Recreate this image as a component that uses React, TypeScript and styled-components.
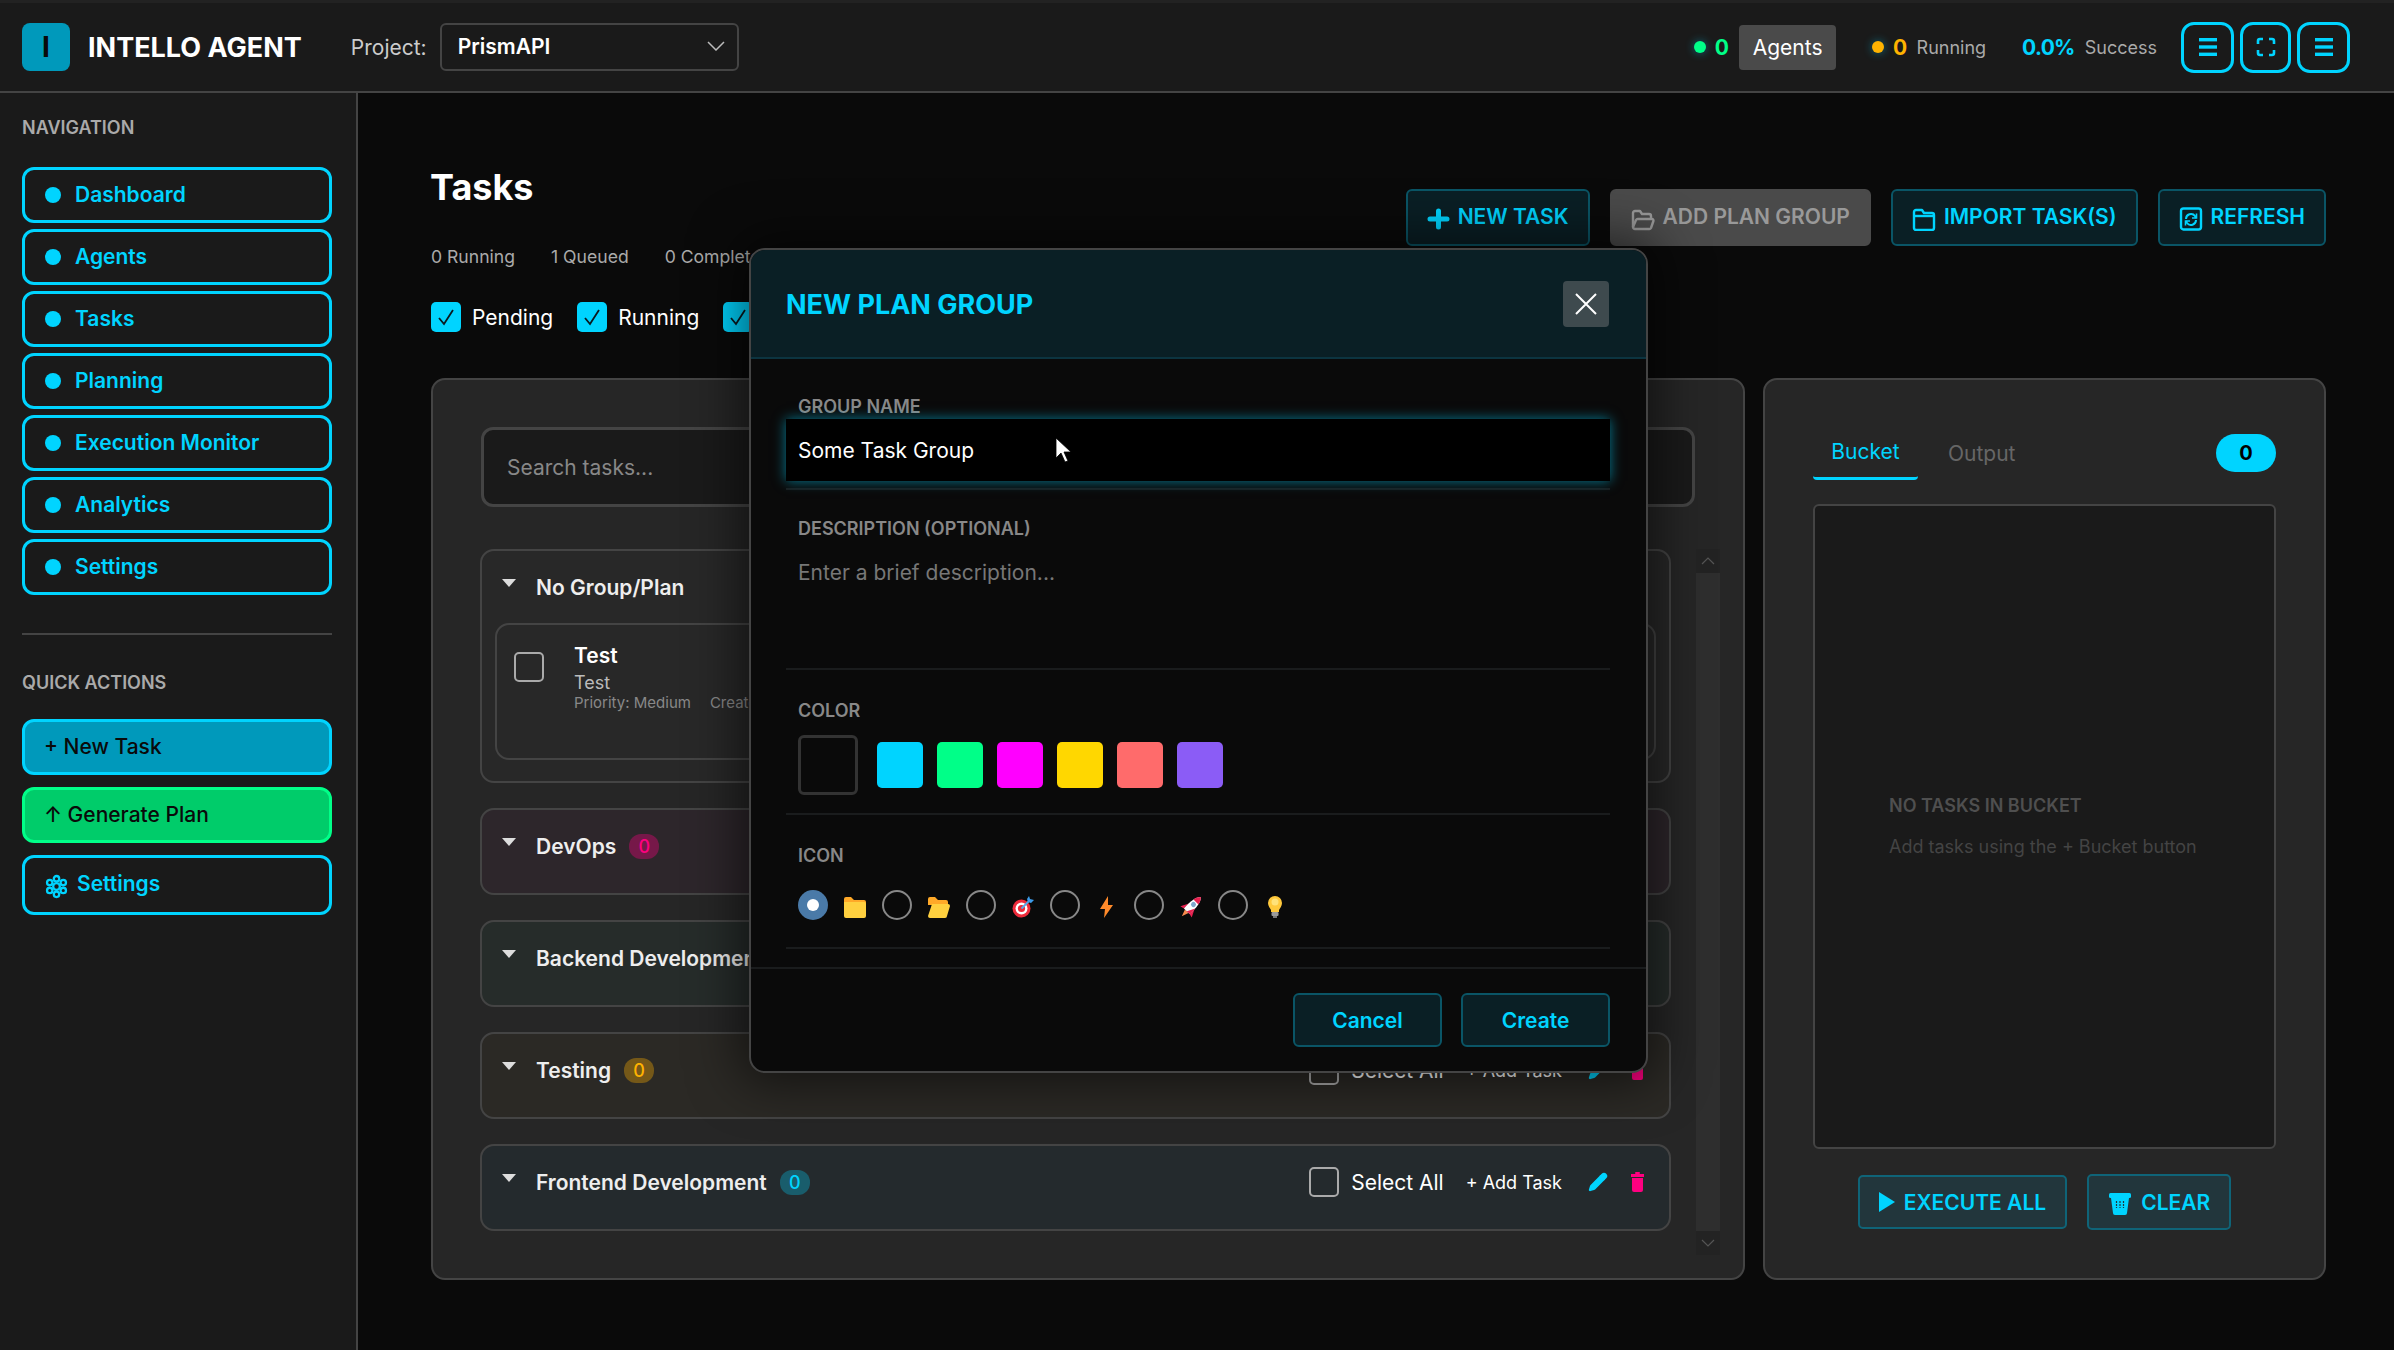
import * as React from "react";
import styled, { createGlobalStyle } from "styled-components";
import { Pencil } from "lucide-react";

const CYAN = "#00d4ff";

const GlobalStyle = createGlobalStyle`
    html, body {
        margin: 0;
        padding: 0;
        background: #0a0a0a;
        font-family: "Inter", "Noto Sans", sans-serif;
    }
    * {
        box-sizing: border-box;
    }
`;

const Page = styled.div`
    position: relative;
    width: 2394px;
    height: 1350px;
    overflow: hidden;
    display: flex;
    flex-direction: column;
    background: #0a0a0a;
    color: #fff;
`;

const TopBar = styled.header`
    flex: 0 0 93px;
    display: flex;
    align-items: center;
    padding: 0 44px 0 22px;
    background: #1a1a1a;
    border-top: 3px solid #222;
    border-bottom: 2px solid #444;
`;

const Logo = styled.div`
    width: 48px;
    height: 48px;
    border-radius: 8px;
    background: #0099bb;
    color: #0a0a0a;
    font-size: 28px;
    font-weight: 700;
    display: flex;
    align-items: center;
    justify-content: center;
`;

const Brand = styled.div`
    margin-left: 18px;
    font-size: 27px;
    font-weight: 700;
    white-space: nowrap;
`;

const ProjectLabel = styled.span`
    margin-left: 49px;
    font-size: 21px;
    color: #ccc;
`;

const ProjectSelect = styled.div`
    margin-left: 13px;
    width: 299px;
    height: 48px;
    border: 2px solid #444;
    border-radius: 6px;
    background: #1a1a1a;
    padding: 0 12px 2px 16px;
    display: flex;
    align-items: center;
    justify-content: space-between;
    font-size: 21px;
    font-weight: 600;
`;

const TopRight = styled.div`
    margin-left: auto;
    display: flex;
    align-items: center;
`;

const Stat = styled.div`
    display: flex;
    align-items: center;
    margin-right: 36px;
`;

const Dot = styled.span<{ $color: string }>`
    width: 12px;
    height: 12px;
    border-radius: 50%;
    background: ${(p) => p.$color};
    box-shadow: 0 0 10px rgba(0, 212, 255, 0.45);
    margin-right: 9px;
`;

const StatValue = styled.span<{ $color: string }>`
    font-size: 21px;
    font-weight: 700;
    letter-spacing: -0.7px;
    color: ${(p) => p.$color};
`;

const StatCaption = styled.span`
    margin-left: 10px;
    font-size: 18px;
    color: #aaa;
`;

const AgentsChip = styled.span`
    margin-left: 11px;
    width: 97px;
    height: 45px;
    border-radius: 4px;
    background: #4a4a4a;
    font-size: 21px;
    display: flex;
    align-items: center;
    justify-content: center;
`;

const TopButtons = styled.div`
    display: flex;
    gap: 6px;
    margin-left: -12px;
`;

const SquareButton = styled.div<{ $width: number }>`
    width: ${(p) => p.$width}px;
    height: 51px;
    border: 3px solid ${CYAN};
    border-radius: 13px;
    display: flex;
    align-items: center;
    justify-content: center;
`;

const Body = styled.div`
    flex: 1;
    display: flex;
    min-height: 0;
`;

const Sidebar = styled.aside`
    flex: 0 0 358px;
    background: #1a1a1a;
    border-right: 2px solid #444;
    padding: 24px 24px 0 22px;
`;

const SideHeading = styled.div`
    font-size: 18px;
    line-height: 22px;
    font-weight: 600;
    color: #aaa;
`;

const NavList = styled.nav`
    margin-top: 28px;
    display: flex;
    flex-direction: column;
    gap: 6px;
`;

const NavItem = styled.div`
    height: 56px;
    border: 3px solid ${CYAN};
    border-radius: 12px;
    padding: 0 0 1px 20px;
    display: flex;
    align-items: center;
    gap: 14px;
    font-size: 21px;
    font-weight: 600;
    color: ${CYAN};
`;

const NavDot = styled.span`
    width: 16px;
    height: 16px;
    border-radius: 50%;
    background: ${CYAN};
`;

const SideDivider = styled.hr`
    margin: 38px 0 37px;
    border: 0;
    border-top: 2px solid #444;
`;

const QuickList = styled.div`
    margin-top: 25px;
    display: flex;
    flex-direction: column;
    gap: 12px;
`;

const QuickButton = styled.div<{ $bg: string; $border: string; $color: string; $height: number }>`
    height: ${(p) => p.$height}px;
    border: 3px solid ${(p) => p.$border};
    border-radius: 12px;
    background: ${(p) => p.$bg};
    color: ${(p) => p.$color};
    padding: 0 0 1px 19px;
    display: flex;
    align-items: center;
    gap: 8px;
    font-size: 21px;
    font-weight: 500;
`;

const QuickSettings = styled(QuickButton)`
    font-weight: 600;
    padding-bottom: 3px;
    svg {
        margin-top: 5px;
    }
`;

const Main = styled.main`
    flex: 1;
    min-width: 0;
    padding: 72px 68px 0 73px;
`;

const Head = styled.div`
    display: flex;
    justify-content: space-between;
    align-items: flex-start;
`;

const Title = styled.h1`
    margin: 0 0 0 -1px;
    font-size: 36px;
    line-height: 44px;
    font-weight: 700;
`;

const Counters = styled.div`
    margin-top: 37px;
    display: flex;
    gap: 36px;
    font-size: 17.6px;
    line-height: 22px;
    color: #aaa;
`;

const Filters = styled.div`
    margin-top: 34px;
    display: flex;
    gap: 24px;
`;

const Filter = styled.label`
    display: flex;
    align-items: center;
    gap: 11px;
    font-size: 21px;
    white-space: nowrap;
`;

const CheckBox = styled.span<{ $on?: boolean }>`
    flex: 0 0 30px;
    width: 30px;
    height: 30px;
    border-radius: 5px;
    background: ${(p) => (p.$on ? CYAN : "transparent")};
    border: ${(p) => (p.$on ? "none" : "2px solid #aaa")};
    display: flex;
    align-items: center;
    justify-content: center;
`;

const Actions = styled.div`
    padding-top: 24px;
    display: flex;
    gap: 20px;
`;

const ActionButton = styled.div<{ $disabled?: boolean }>`
    height: 57px;
    padding: 0 19px 3px;
    border: 2px solid ${(p) => (p.$disabled ? "#4a4a4a" : "#0a5566")};
    border-radius: 6px;
    background: ${(p) => (p.$disabled ? "#4a4a4a" : "#0a1f25")};
    color: ${(p) => (p.$disabled ? "#999" : CYAN)};
    display: flex;
    align-items: center;
    gap: 8px;
    font-size: 21px;
    font-weight: 600;
    white-space: nowrap;
    svg {
        margin-top: 6px;
    }
`;

const Content = styled.div`
    margin-top: 46px;
    height: 902px;
    display: flex;
    gap: 18px;
`;

const TasksPanel = styled.section`
    flex: 1;
    min-width: 0;
    background: #262626;
    border: 2px solid #444;
    border-radius: 14px;
    padding: 47px 48px 0 48px;
`;

const SearchBox = styled.div`
    height: 80px;
    border: 3px solid #444;
    border-radius: 12px;
    background: #1a1a1a;
    padding-left: 23px;
    display: flex;
    align-items: center;
    font-size: 21px;
    color: #888;
`;

const ListArea = styled.div`
    margin: 42px -25px 0 -1px;
    display: flex;
    gap: 25px;
`;

const Groups = styled.div`
    flex: 1;
    display: flex;
    flex-direction: column;
    gap: 25px;
`;

const Group = styled.div<{ $bg: string }>`
    position: relative;
    min-height: 87px;
    background: ${(p) => p.$bg};
    border: 2px solid #444;
    border-radius: 14px;
    padding: 0 13px;
`;

const GroupHeader = styled.div`
    height: 72px;
    padding: 0 12px 0 7px;
    display: flex;
    align-items: center;
    font-size: 21px;
    font-weight: 600;
    color: #eee;
`;

const Caret = styled.span`
    width: 0;
    height: 0;
    margin: -8px 20px 0 0;
    border-left: 7.5px solid transparent;
    border-right: 7.5px solid transparent;
    border-top: 8px solid #ddd;
`;

const GroupBadge = styled.span<{ $color: string; $bg: string }>`
    margin-left: 13px;
    width: 30px;
    height: 25px;
    border-radius: 12px;
    background: ${(p) => p.$bg};
    color: ${(p) => p.$color};
    font-size: 18px;
    font-weight: 500;
    display: flex;
    align-items: center;
    justify-content: center;
`;

const GroupTools = styled.div`
    margin-left: auto;
    display: flex;
    align-items: center;
    font-weight: 400;
`;

const SelectAll = styled.span`
    margin-left: 12px;
    font-size: 21px;
    color: #fff;
`;

const AddTask = styled.span`
    margin: 0 26px 0 22px;
    font-size: 18px;
    color: #fff;
`;

const TrashWrap = styled.span`
    margin-left: 23px;
    display: flex;
`;

const TaskCard = styled.div`
    height: 137px;
    margin-bottom: 21px;
    border: 2px solid #444;
    border-radius: 14px;
    padding: 27px 17px;
    display: flex;
    gap: 30px;
`;

const TaskText = styled.div`
    display: flex;
    flex-direction: column;
`;

const TaskName = styled.div`
    font-size: 21px;
    line-height: 26px;
    margin-top: -9px;
    font-weight: 600;
`;

const TaskDescription = styled.div`
    font-size: 18px;
    line-height: 22px;
    margin-top: 3px;
    color: #bbb;
`;

const TaskMeta = styled.div`
    display: flex;
    gap: 19px;
    margin-top: -1px;
    font-size: 15px;
    line-height: 20px;
    color: #888;
`;

const ScrollBar = styled.div`
    flex: 0 0 24px;
    height: 706px;
    background: #232323;
    display: flex;
    flex-direction: column;
`;

const ScrollArrow = styled.div`
    height: 24px;
    display: flex;
    align-items: center;
    justify-content: center;
`;

const ScrollThumb = styled.div`
    flex: 1;
    background: #2e2e2e;
`;

const BucketPanel = styled.section`
    flex: 0 0 563px;
    background: #262626;
    border: 2px solid #444;
    border-radius: 14px;
    padding: 55px 48px 0 48px;
    display: flex;
    flex-direction: column;
`;

const TabRow = styled.div`
    height: 45px;
    display: flex;
    align-items: flex-start;
`;

const Tab = styled.div<{ $active?: boolean }>`
    width: ${(p) => (p.$active ? "105px" : "auto")};
    height: 45px;
    margin-left: ${(p) => (p.$active ? "0" : "30px")};
    padding-top: ${(p) => (p.$active ? "4px" : "6px")};
    text-align: center;
    font-size: 21px;
    line-height: 26px;
    color: ${(p) => (p.$active ? CYAN : "#666")};
    border-bottom: ${(p) => (p.$active ? `3px solid ${CYAN}` : "none")};
    border-radius: 0 0 4px 4px;
`;

const CountPill = styled.span`
    margin: -1px 0 0 auto;
    width: 60px;
    height: 38px;
    border-radius: 19px;
    background: ${CYAN};
    color: #000;
    font-size: 20px;
    font-weight: 700;
    display: flex;
    align-items: center;
    justify-content: center;
`;

const BucketBox = styled.div`
    margin-top: 24px;
    height: 645px;
    background: #1a1a1a;
    border: 2px solid #444;
    border-radius: 6px;
    padding: 289px 0 0 74px;
`;

const EmptyTitle = styled.div`
    font-size: 18px;
    line-height: 22px;
    font-weight: 600;
    color: #4f4f4f;
`;

const EmptyHint = styled.div`
    margin-top: 19px;
    font-size: 18px;
    line-height: 22px;
    color: #444;
`;

const BucketActions = styled.div`
    margin-top: 25px;
    display: flex;
    justify-content: center;
    align-items: center;
    gap: 20px;
`;

const BucketButton = styled.div<{ $height: number }>`
    height: ${(p) => p.$height}px;
    padding: 0 19px;
    border: 2px solid #0f6478;
    border-radius: 5px;
    background: #22363c;
    color: ${CYAN};
    display: flex;
    align-items: center;
    gap: 9px;
    font-size: 21px;
    font-weight: 600;
    white-space: nowrap;
`;

// modal sits over the page, so this one is placed directly
const Modal = styled.div`
    position: absolute;
    left: 749px;
    top: 248px;
    width: 899px;
    height: 825px;
    background: #0a0a0a;
    border: 2px solid #444;
    border-radius: 16px;
    box-shadow: 0 0 50px 10px rgba(0, 0, 0, 0.55);
    overflow: hidden;
`;

const ModalHead = styled.div`
    height: 109px;
    padding: 1px 37px 0 35px;
    background: #0a1f25;
    border-bottom: 2px solid #0c3440;
    display: flex;
    align-items: center;
    justify-content: space-between;
`;

const ModalTitle = styled.h2`
    margin: 1px 0 0;
    font-size: 27px;
    font-weight: 700;
    color: ${CYAN};
`;

const CloseButton = styled.div`
    width: 46px;
    height: 46px;
    border-radius: 4px;
    background: #3e4a4e;
    display: flex;
    align-items: center;
    justify-content: center;
`;

const ModalBody = styled.div`
    padding: 37px 36px 0 35px;
`;

const Field = styled.div<{ $top: number; $bottom: number; $height?: number }>`
    padding: ${(p) => p.$top}px 0 ${(p) => p.$bottom}px;
    height: ${(p) => (p.$height ? `${p.$height}px` : "auto")};
    border-bottom: 2px solid #1a1c1d;
`;

const FieldLabel = styled.div`
    margin-left: 12px;
    font-size: 18px;
    line-height: 22px;
    font-weight: 600;
    color: #888;
`;

const NameInput = styled.div`
    position: relative;
    margin-top: 1px;
    height: 62px;
    background: #000;
    padding-left: 12px;
    display: flex;
    align-items: center;
    font-size: 21px;
    box-shadow: 0 0 12px rgba(0, 212, 255, 0.55);
`;

const Cursor = styled.svg`
    position: absolute;
    left: 269px;
    top: 19px;
`;

const Placeholder = styled.div`
    margin: 20px 0 0 12px;
    font-size: 21px;
    line-height: 26px;
    color: #777;
`;

const Swatches = styled.div`
    margin: 13px 0 0 12px;
    display: flex;
    align-items: center;
    gap: 14px;
`;

const NoColor = styled.div`
    width: 60px;
    height: 60px;
    margin-right: 5px;
    border: 3px solid #333;
    border-radius: 6px;
`;

const Swatch = styled.div<{ $color: string }>`
    width: 46px;
    height: 46px;
    border-radius: 5px;
    background: ${(p) => p.$color};
`;

const IconChoices = styled.div`
    margin: 23px 0 0 12px;
    display: flex;
    align-items: center;
    gap: 16px;
`;

const Radio = styled.span<{ $on?: boolean }>`
    width: 30px;
    height: 30px;
    border-radius: 50%;
    background: ${(p) => (p.$on ? "#4a7aa8" : "transparent")};
    border: ${(p) => (p.$on ? "none" : "2px solid #888")};
    display: flex;
    align-items: center;
    justify-content: center;
    &::after {
        content: "";
        display: ${(p) => (p.$on ? "block" : "none")};
        width: 12px;
        height: 12px;
        border-radius: 50%;
        background: #fff;
    }
`;

const IconCell = styled.span`
    width: 22px;
    height: 22px;
    margin-top: 4px;
    display: flex;
    align-items: center;
    justify-content: center;
`;

const ModalFoot = styled.div`
    margin-top: 18px;
    padding: 24px 36px 0;
    border-top: 2px solid #1a1c1d;
    display: flex;
    justify-content: flex-end;
    gap: 19px;
`;

const FootButton = styled.div`
    width: 149px;
    height: 54px;
    border: 2px solid #0a5566;
    border-radius: 6px;
    background: #0a1f25;
    color: ${CYAN};
    font-size: 21px;
    font-weight: 600;
    display: flex;
    align-items: center;
    justify-content: center;
`;

const Bars = ({ color }: { color: string }) => (
    <svg width="20" height="20" viewBox="0 0 20 20">
        <rect x="1" y="1" width="18" height="3.4" fill={color} />
        <rect x="1" y="8.3" width="18" height="3.4" fill={color} />
        <rect x="1" y="15.6" width="18" height="3.4" fill={color} />
    </svg>
);

const Corners = () => (
    <svg width="20" height="20" viewBox="0 0 20 20" fill="none" stroke={CYAN} strokeWidth="2.6">
        <path d="M2 7V4a2 2 0 0 1 2-2h3M13 2h3a2 2 0 0 1 2 2v3M18 13v3a2 2 0 0 1-2 2h-3M7 18H4a2 2 0 0 1-2-2v-3" />
    </svg>
);

const Tick = () => (
    <svg width="20" height="20" viewBox="0 0 20 20" fill="none" stroke="#0a1a20" strokeWidth="1.8">
        <path d="M3 11l5 6L17 3" />
    </svg>
);

const Gear = () => (
    <svg width="25" height="25" viewBox="0 0 24 24" fill="none" stroke={CYAN} strokeWidth="2.2">
        <circle cx="12" cy="12" r="3.2" />
        <circle cx="12" cy="4.5" r="2.6" />
        <circle cx="12" cy="19.5" r="2.6" />
        <circle cx="5.5" cy="8.2" r="2.6" />
        <circle cx="18.5" cy="8.2" r="2.6" />
        <circle cx="5.5" cy="15.8" r="2.6" />
        <circle cx="18.5" cy="15.8" r="2.6" />
    </svg>
);

const Plus = () => (
    <svg width="23" height="22" viewBox="0 0 23 22" fill="none" stroke={CYAN} strokeWidth="5" strokeLinecap="round">
        <path d="M11.5 3v16M3 11h17" />
    </svg>
);

const OpenFolderLine = () => (
    <svg width="24" height="23" viewBox="0 0 24 23" fill="none" stroke="#999" strokeWidth="2.4" strokeLinejoin="round">
        <path d="M2 19V5a2 2 0 0 1 2-2h5l2 3h7a2 2 0 0 1 2 2v3" />
        <path d="M2 19l3-7a2 2 0 0 1 2-1h14a1.5 1.5 0 0 1 1.4 2l-2.4 7a2 2 0 0 1-2 1H4a2 2 0 0 1-2-2z" />
    </svg>
);

const FolderLine = () => (
    <svg width="24" height="23" viewBox="0 0 24 23" fill="none" stroke={CYAN} strokeWidth="2.4" strokeLinejoin="round">
        <path d="M2 4a2 2 0 0 1 2-2h6l2 3h8a2 2 0 0 1 2 2v13a2 2 0 0 1-2 2H4a2 2 0 0 1-2-2z" />
        <path d="M2 8h20" />
    </svg>
);

const RefreshBox = () => (
    <svg width="24" height="24" viewBox="0 0 24 24" fill="none" stroke={CYAN} strokeWidth="2.4">
        <rect x="2" y="1.5" width="20" height="21" rx="2.5" />
        <path d="M7 12a5 5 0 0 1 9-3l1 2M17 13a5 5 0 0 1-9 3l-1-2" strokeWidth="2" />
        <path d="M17.5 6.5v4.5H13M6.5 18.5V14H11" strokeWidth="1.6" />
    </svg>
);

const Trash = ({ color }: { color: string }) => (
    <svg width="13" height="20" viewBox="0 0 13 20" fill={color}>
        <rect x="4" y="0" width="5" height="2" rx="1" />
        <rect x="0" y="2" width="13" height="3" />
        <path d="M1 6h11v12a2 2 0 0 1-2 2H3a2 2 0 0 1-2-2z" />
    </svg>
);

const Cup = () => (
    <svg width="24" height="24" viewBox="0 0 24 24" fill={CYAN} style={{ marginTop: 4 }}>
        <rect x="1" y="1" width="22" height="5" rx="1.5" />
        <path d="M3 6h18l-2 15a2 2 0 0 1-2 2H7a2 2 0 0 1-2-2z" />
        <path d="M8.5 9v7M12 9v7M15.5 9v7" stroke="#22363c" strokeWidth="1.2" strokeDasharray="2 1" />
    </svg>
);

const FolderEmoji = () => (
    <svg width="22" height="21" viewBox="0 0 22 21">
        <path d="M0 2a2 2 0 0 1 2-2h5l3 3h10a2 2 0 0 1 2 2v3H0z" fill="#ffa928" />
        <path d="M0 5h20a2 2 0 0 1 2 2v12a2 2 0 0 1-2 2H2a2 2 0 0 1-2-2z" fill="#ffd03f" />
    </svg>
);

const OpenFolderEmoji = () => (
    <svg width="22" height="21" viewBox="0 0 22 21">
        <path d="M0 2a2 2 0 0 1 2-2h5l3 3h8a2 2 0 0 1 2 2v3H0v11z" fill="#ffa928" />
        <path d="M4 7h16a2 2 0 0 1 2 2l-3 10a2 2 0 0 1-2 2H2a2 2 0 0 1-2-2z" fill="#ffd03f" />
    </svg>
);

const DartEmoji = () => (
    <svg width="22" height="22" viewBox="0 0 22 22">
        <circle cx="9.5" cy="12.5" r="9" fill="#ee2b3b" />
        <circle cx="9.5" cy="12.5" r="6" fill="#fff" />
        <circle cx="9.5" cy="12.5" r="3.6" fill="#ee2b3b" />
        <path d="M9.5 12.5L18 4" stroke="#56a8e8" strokeWidth="2" />
        <path d="M15 3l2-3 1 3 4 1-3 3-3-1z" fill="#3d9be9" />
    </svg>
);

const BoltEmoji = () => (
    <svg width="14" height="22" viewBox="0 0 14 22">
        <path d="M8 0L0 13h5l-1 9 9-13H8z" fill="#ff8a2a" />
    </svg>
);

const RocketEmoji = () => (
    <svg width="22" height="22" viewBox="0 0 22 22">
        <g transform="rotate(45 11 11)">
            <path d="M8.5 17h5L11 24z" fill="#f98a4e" />
            <path d="M7 10L3 18l4-1zM15 10l4 8-4-1z" fill="#e8204f" />
            <path d="M11-3c4 4 4.5 11 4 20H7C6.500 8 7 1 11-3z" fill="#fff" />
            <path d="M11-3c2 2 3 4 3.500 7h-7C8 1 9-1 11-3z" fill="#e8204f" />
            <path d="M11 17h4c.3-3 .3-5 .2-8z" fill="#e8204f" />
            <circle cx="11" cy="7.500" r="2.500" fill="#7fa8cc" />
        </g>
    </svg>
);

const BulbEmoji = () => (
    <svg width="14" height="22" viewBox="0 0 14 22">
        <path d="M7 0a7 7 0 0 1 7 7c0 3-2 5-3 7v2H3v-2C2 12 0 10 0 7a7 7 0 0 1 7-7z" fill="#ffc93c" />
        <circle cx="7" cy="6" r="3.5" fill="#ffe27a" />
        <rect x="3.5" y="16" width="7" height="4" rx="1" fill="#9a9a9a" />
        <rect x="5" y="20" width="4" height="2" fill="#777" />
    </svg>
);

const iconChoices = [
    { id: "folder", glyph: <FolderEmoji /> },
    { id: "open", glyph: <OpenFolderEmoji /> },
    { id: "dart", glyph: <DartEmoji /> },
    { id: "bolt", glyph: <BoltEmoji /> },
    { id: "rocket", glyph: <RocketEmoji /> },
    { id: "bulb", glyph: <BulbEmoji /> },
];

const navItems = ["Dashboard", "Agents", "Tasks", "Planning", "Execution Monitor", "Analytics", "Settings"];
const swatches = ["#00d4ff", "#00ff88", "#ff00ff", "#ffd700", "#ff6b6b", "#8b5cf6"];

const groups = [
    { name: "DevOps", bg: "#2d262b", badge: "#ff0080", badgeBg: "rgba(255,0,128,.35)" },
    { name: "Backend Development", bg: "#262c2a", badge: "#00ff88", badgeBg: "rgba(0,255,136,.3)" },
    { name: "Testing", bg: "#2b2925", badge: "#ffb300", badgeBg: "rgba(255,179,0,.35)" },
    { name: "Frontend Development", bg: "#242a2d", badge: CYAN, badgeBg: "rgba(0,212,255,.3)" },
];

const GroupRowTools = () => (
    <GroupTools>
        <CheckBox />
        <SelectAll>Select All</SelectAll>
        <AddTask>+ Add Task</AddTask>
        <Pencil size={20} color={CYAN} fill={CYAN} />
        <TrashWrap>
            <Trash color="#ff0080" />
        </TrashWrap>
    </GroupTools>
);

export default function App() {
    return (
        <Page>
            <GlobalStyle />
            <TopBar>
                <Logo>I</Logo>
                <Brand>INTELLO AGENT</Brand>
                <ProjectLabel>Project:</ProjectLabel>
                <ProjectSelect>
                    PrismAPI
                    <svg width="18" height="10" viewBox="0 0 18 10" fill="none" stroke="#bbb" strokeWidth="1.5">
                        <path d="M1 1l8 8 8-8" />
                    </svg>
                </ProjectSelect>
                <TopRight>
                    <Stat>
                        <Dot $color="#00ff88" />
                        <StatValue $color="#00ff88">0</StatValue>
                        <AgentsChip>Agents</AgentsChip>
                    </Stat>
                    <Stat>
                        <Dot $color="#ffb300" />
                        <StatValue $color="#ffb300">0</StatValue>
                        <StatCaption>Running</StatCaption>
                    </Stat>
                    <Stat>
                        <StatValue $color={CYAN}>0.0%</StatValue>
                        <StatCaption>Success</StatCaption>
                    </Stat>
                    <TopButtons>
                        <SquareButton $width={53}>
                            <Bars color={CYAN} />
                        </SquareButton>
                        <SquareButton $width={51}>
                            <Corners />
                        </SquareButton>
                        <SquareButton $width={53}>
                            <Bars color={CYAN} />
                        </SquareButton>
                    </TopButtons>
                </TopRight>
            </TopBar>

            <Body>
                <Sidebar>
                    <SideHeading>NAVIGATION</SideHeading>
                    <NavList>
                        {navItems.map((item) => (
                            <NavItem key={item}>
                                <NavDot />
                                {item}
                            </NavItem>
                        ))}
                    </NavList>
                    <SideDivider />
                    <SideHeading>QUICK ACTIONS</SideHeading>
                    <QuickList>
                        <QuickButton $bg="#0099bb" $border={CYAN} $color="#0a0a0a" $height={56}>
                            + New Task
                        </QuickButton>
                        <QuickButton $bg="#00cc6a" $border="#00ff88" $color="#0a0a0a" $height={56}>
                            ↑ Generate Plan
                        </QuickButton>
                        <QuickSettings $bg="#1a1a1a" $border={CYAN} $color={CYAN} $height={60}>
                            <Gear />
                            Settings
                        </QuickSettings>
                    </QuickList>
                </Sidebar>

                <Main>
                    <Head>
                        <div>
                            <Title>Tasks</Title>
                            <Counters>
                                <span>0 Running</span>
                                <span>1 Queued</span>
                                <span>0 Completed</span>
                            </Counters>
                            <Filters>
                                <Filter>
                                    <CheckBox $on>
                                        <Tick />
                                    </CheckBox>
                                    Pending
                                </Filter>
                                <Filter>
                                    <CheckBox $on>
                                        <Tick />
                                    </CheckBox>
                                    Running
                                </Filter>
                                <Filter>
                                    <CheckBox $on>
                                        <Tick />
                                    </CheckBox>
                                </Filter>
                            </Filters>
                        </div>
                        <Actions>
                            <ActionButton>
                                <Plus />
                                NEW TASK
                            </ActionButton>
                            <ActionButton $disabled>
                                <OpenFolderLine />
                                ADD PLAN GROUP
                            </ActionButton>
                            <ActionButton>
                                <FolderLine />
                                IMPORT TASK(S)
                            </ActionButton>
                            <ActionButton>
                                <RefreshBox />
                                REFRESH
                            </ActionButton>
                        </Actions>
                    </Head>

                    <Content>
                        <TasksPanel>
                            <SearchBox>Search tasks...</SearchBox>
                            <ListArea>
                                <Groups>
                                    <Group $bg="#282828">
                                        <GroupHeader>
                                            <Caret />
                                            No Group/Plan
                                            <GroupRowTools />
                                        </GroupHeader>
                                        <TaskCard>
                                            <CheckBox />
                                            <TaskText>
                                                <TaskName>Test</TaskName>
                                                <TaskDescription>Test</TaskDescription>
                                                <TaskMeta>
                                                    <span>Priority: Medium</span>
                                                    <span>Created</span>
                                                </TaskMeta>
                                            </TaskText>
                                        </TaskCard>
                                    </Group>
                                    {groups.map((group) => (
                                        <Group key={group.name} $bg={group.bg}>
                                            <GroupHeader>
                                                <Caret />
                                                {group.name}
                                                <GroupBadge $color={group.badge} $bg={group.badgeBg}>
                                                    0
                                                </GroupBadge>
                                                <GroupRowTools />
                                            </GroupHeader>
                                        </Group>
                                    ))}
                                </Groups>
                                <ScrollBar>
                                    <ScrollArrow>
                                        <svg width="14" height="8" viewBox="0 0 14 8" fill="none" stroke="#555" strokeWidth="1.2">
                                            <path d="M1 7l6-6 6 6" />
                                        </svg>
                                    </ScrollArrow>
                                    <ScrollThumb />
                                    <ScrollArrow>
                                        <svg width="14" height="8" viewBox="0 0 14 8" fill="none" stroke="#555" strokeWidth="1.2">
                                            <path d="M1 1l6 6 6-6" />
                                        </svg>
                                    </ScrollArrow>
                                </ScrollBar>
                            </ListArea>
                        </TasksPanel>

                        <BucketPanel>
                            <TabRow>
                                <Tab $active>Bucket</Tab>
                                <Tab>Output</Tab>
                                <CountPill>0</CountPill>
                            </TabRow>
                            <BucketBox>
                                <EmptyTitle>NO TASKS IN BUCKET</EmptyTitle>
                                <EmptyHint>Add tasks using the + Bucket button</EmptyHint>
                            </BucketBox>
                            <BucketActions>
                                <BucketButton $height={54}>
                                    <svg width="16" height="20" viewBox="0 0 16 20" fill={CYAN}>
                                        <path d="M0 0l16 10L0 20z" />
                                    </svg>
                                    EXECUTE ALL
                                </BucketButton>
                                <BucketButton $height={56}>
                                    <Cup />
                                    CLEAR
                                </BucketButton>
                            </BucketActions>
                        </BucketPanel>
                    </Content>
                </Main>
            </Body>

            <Modal>
                <ModalHead>
                    <ModalTitle>NEW PLAN GROUP</ModalTitle>
                    <CloseButton>
                        <svg width="24" height="24" viewBox="0 0 24 24" stroke="#fff" strokeWidth="2">
                            <path d="M2 2l20 20M22 2L2 22" />
                        </svg>
                    </CloseButton>
                </ModalHead>
                <ModalBody>
                    <Field $top={0} $bottom={7}>
                        <FieldLabel>GROUP NAME</FieldLabel>
                        <NameInput>
                            Some Task Group
                            <Cursor width="18" height="25" viewBox="0 0 18 25">
                                <path d="M1 0v20l5-5 4 9 3-1-4-9h7z" fill="#fff" stroke="#000" strokeWidth="0.8" />
                            </Cursor>
                        </NameInput>
                    </Field>
                    <Field $top={28} $bottom={0} $height={180}>
                        <FieldLabel>DESCRIPTION (OPTIONAL)</FieldLabel>
                        <Placeholder>Enter a brief description...</Placeholder>
                    </Field>
                    <Field $top={30} $bottom={18}>
                        <FieldLabel>COLOR</FieldLabel>
                        <Swatches>
                            <NoColor />
                            {swatches.map((color) => (
                                <Swatch key={color} $color={color} />
                            ))}
                        </Swatches>
                    </Field>
                    <Field $top={30} $bottom={27}>
                        <FieldLabel>ICON</FieldLabel>
                        <IconChoices>
                            {iconChoices.map((choice, idx) => (
                                <React.Fragment key={choice.id}>
                                    <Radio $on={idx === 0} />
                                    <IconCell>{choice.glyph}</IconCell>
                                </React.Fragment>
                            ))}
                        </IconChoices>
                    </Field>
                </ModalBody>
                <ModalFoot>
                    <FootButton>Cancel</FootButton>
                    <FootButton>Create</FootButton>
                </ModalFoot>
            </Modal>
        </Page>
    );
}
